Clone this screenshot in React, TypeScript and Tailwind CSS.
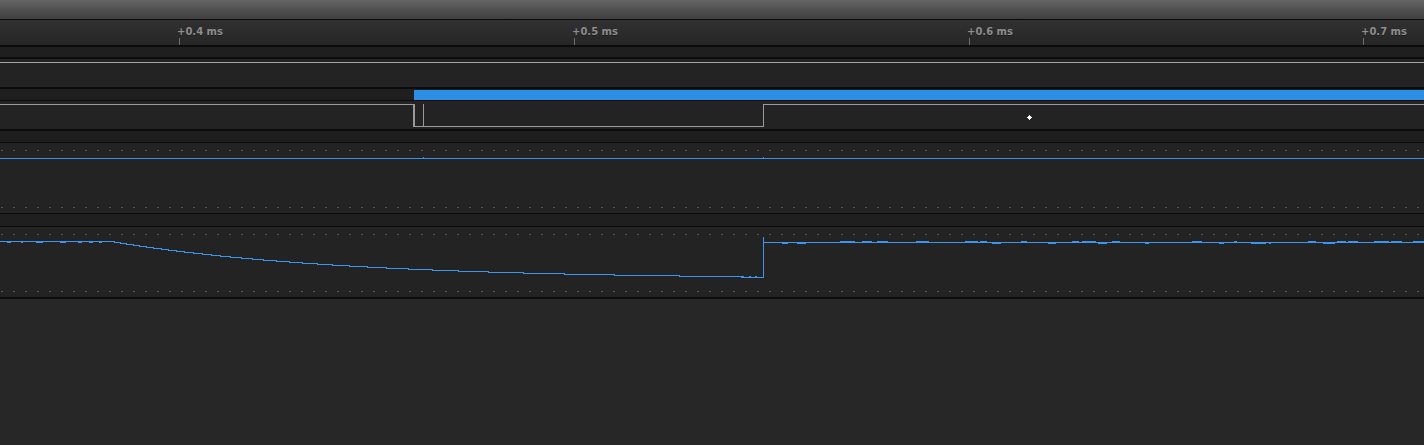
import React from "react";

const W = 1424;

function rng(seed: number) {
  let s = seed;
  return () => {
    s = (s * 1103515245 + 12345) & 0x7fffffff;
    return s / 0x7fffffff;
  };
}

type Blip = { x: number; y: number; w: number };

function analogData(top: number): { d: string; blips: Blip[] } {
  const r = rng(23);
  const ys: number[] = [];
  for (let x = 0; x <= W; x++) {
    let y: number;
    if (x < 110) y = 241;
    else if (x < 763) {
      y = Math.round(241 + 37.5 * (1 - Math.exp(-(x - 110) / 225)));
      if (x >= 741) y = 277;
    } else y = 242;
    ys.push(y - top);
  }
  let d = `M0 ${ys[0] + 0.5}`;
  for (let x = 1; x <= W; x++) {
    if (x === 763) {
      d += ` H763.5 V${237 - top} V${ys[x] + 0.5}`;
      continue;
    }
    if (ys[x] !== ys[x - 1]) d += ` H${x} V${ys[x] + 0.5}`;
  }
  d += ` H${W}`;

  const blips: Blip[] = [];
  let x = 4;
  while (x < 110) {
    if (r() < 0.12) {
      const w = 2 + Math.floor(r() * 6);
      blips.push({ x, y: ys[x] + 1, w });
      x += w + 3;
    } else x += 1;
  }
  x = 742;
  while (x < 760) {
    if (r() < 0.2) {
      blips.push({ x, y: ys[x] - 1, w: 2 });
      x += 5;
    } else x += 1;
  }
  x = 780;
  while (x < W) {
    if (r() < 0.08) {
      const w = 2 + Math.floor(r() * 14);
      const off = r() < 0.5 ? -1 : 1;
      blips.push({ x, y: ys[x] + off, w });
      x += w + 2;
    } else x += 1;
  }
  return { d, blips };
}

const Dots = ({ y }: { y: number }) => (
  <line
    x1={1}
    x2={W}
    y1={y + 0.5}
    y2={y + 0.5}
    stroke="#555555"
    strokeWidth={1}
    strokeDasharray="2 10"
  />
);

const ticks = [
  { x: 179, label: "+0.4 ms" },
  { x: 574, label: "+0.5 ms" },
  { x: 969, label: "+0.6 ms" },
  { x: 1363, label: "+0.7 ms" },
];

export default function App() {
  const analog = analogData(227);
  return (
    <div className="flex h-[445px] w-[1424px] flex-col overflow-hidden bg-[#272727]">
      {/* header */}
      <div className="h-[20px] shrink-0 border-b border-[#0b0b0b] bg-gradient-to-b from-[#646464] to-[#404040]" />
      {/* ruler */}
      <div className="relative h-[27px] shrink-0 border-b-2 border-[#0c0c0c] bg-gradient-to-b from-[#313131] to-[#262626]">
        {ticks.map((t) => (
          <React.Fragment key={t.label}>
            <span
              className="absolute top-[6px] text-[10px] leading-[12px] font-bold whitespace-nowrap text-[#8e8e8e] [font-family:'DejaVu_Sans',sans-serif] [text-shadow:0_1px_0_#1a1a1a]"
              style={{ left: t.x - 2 }}
            >
              {t.label}
            </span>
            <span
              className="absolute top-[18px] h-[7px] w-px bg-[#6e6e6e]"
              style={{ left: t.x }}
            />
          </React.Fragment>
        ))}
      </div>
      {/* thin row */}
      <div className="h-[12px] shrink-0 border-b-2 border-[#0c0c0c] bg-[#1f1f1f]" />
      {/* row A */}
      <div className="h-[30px] shrink-0 border-b-2 border-[#0c0c0c] bg-[#232323]">
        <svg width={W} height={28} className="block" shapeRendering="crispEdges">
          <line x1={0} x2={W} y1={3.5} y2={3.5} stroke="#a3a3a3" strokeWidth={1} />
        </svg>
      </div>
      {/* row B */}
      <div className="h-[12px] shrink-0 border-b border-[#0c0c0c] bg-[#1f1f1f]">
        <svg width={W} height={11} className="block" shapeRendering="crispEdges">
          <rect x={414} y={1} width={W - 414} height={10} fill="#2c8ee4" />
        </svg>
      </div>
      {/* row C */}
      <div className="relative h-[30px] shrink-0 border-b-2 border-[#0c0c0c] bg-[#232323]">
        <svg width={W} height={28} className="block" shapeRendering="crispEdges">
          <path
            d="M0 3.5 H414 V25.5 H763.5 V3.5 H1424"
            fill="none"
            stroke="#9a9a9a"
            strokeWidth={1}
          />
          <line x1={413.5} x2={413.5} y1={3} y2={26} stroke="#9a9a9a" strokeWidth={1} />
          <line x1={423.5} x2={423.5} y1={3} y2={26} stroke="#9a9a9a" strokeWidth={1} />
          <rect x={1028} y={15} width={3} height={3} fill="#ffffff" />
          <rect x={1029} y={14} width={1} height={5} fill="#ffffff" />
          <rect x={1027} y={16} width={5} height={1} fill="#ffffff" />
        </svg>
      </div>
      {/* thin row */}
      <div className="h-[12px] shrink-0 border-b border-[#0c0c0c] bg-[#1e1e1e]" />
      {/* row D */}
      <div className="h-[71px] shrink-0 border-b border-[#0c0c0c] bg-[#232323]">
        <svg width={W} height={70} className="block" shapeRendering="crispEdges">
          <Dots y={7} />
          <Dots y={64} />
          <line x1={0} x2={W} y1={15.5} y2={15.5} stroke="#3390ec" strokeWidth={1} />
          <rect x={423} y={14} width={1} height={1} fill="#3390ec" />
          <rect x={763} y={14} width={1} height={1} fill="#3390ec" />
        </svg>
      </div>
      {/* thin row */}
      <div className="h-[13px] shrink-0 border-b border-[#0c0c0c] bg-[#1f1f1f]" />
      {/* row E */}
      <div className="h-[72px] shrink-0 border-b-2 border-[#0c0c0c] bg-[#232323]">
        <svg width={W} height={70} className="block" shapeRendering="crispEdges">
          <Dots y={7} />
          <Dots y={64} />
          <path d={analog.d} fill="none" stroke="#3a96f0" strokeWidth={1} />
          {analog.blips.map((b, i) => (
            <rect key={i} x={b.x} y={b.y} width={b.w} height={1} fill="#3a96f0" />
          ))}
        </svg>
      </div>
      <div className="flex-1 bg-[#272727]" />
    </div>
  );
}
